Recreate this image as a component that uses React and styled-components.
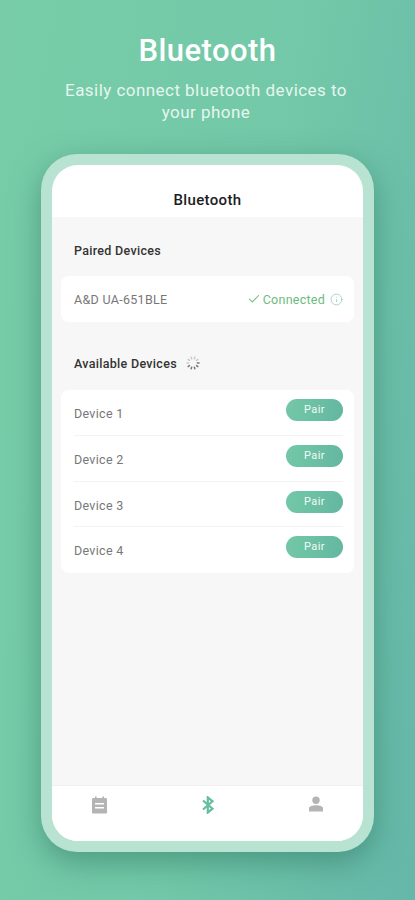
import React from "react";
import styled, { createGlobalStyle } from "styled-components";
import { Check, Info } from "lucide-react";

const Global = createGlobalStyle`
  html, body { margin: 0; padding: 0; }
  body { font-family: Roboto, "Liberation Sans", sans-serif; }
`;

const Page = styled.div`
  width: 415px;
  height: 900px;
  overflow: hidden;
  box-sizing: border-box;
  padding-top: 32px;
  display: flex;
  flex-direction: column;
  align-items: center;
  background: linear-gradient(100deg, #78cda8 0%, #72c8a8 55%, #65b7a9 100%);
`;
const Title = styled.h1`
  margin: 0;
  font-size: 31px;
  line-height: 37px;
  font-weight: 500;
  letter-spacing: 0.45px;
  color: #fff;
`;
const Subtitle = styled.p`
  margin: 11px 3px 0 0;
  width: 300px;
  font-size: 17px;
  line-height: 21.5px;
  letter-spacing: 0.45px;
  text-align: center;
  color: #e6f6ee;
`;
const Frame = styled.div`
  margin-top: 31px;
  width: 333px;
  height: 698px;
  box-sizing: border-box;
  padding: 11px;
  border-radius: 36px;
  background: #b8e3d3;
  box-shadow: 0 10px 30px rgba(40, 110, 90, 0.5);
`;
const Screen = styled.div`
  height: 100%;
  border-radius: 26px;
  overflow: hidden;
  display: flex;
  flex-direction: column;
  background: #fff;
`;
const Header = styled.div`
  height: 52px;
  flex: none;
  display: flex;
  align-items: center;
  justify-content: center;
  padding-top: 17px;
  box-sizing: border-box;
  font-size: 15px;
  font-weight: 500;
  letter-spacing: 0.35px;
  color: #1c1c1c;
`;
const Body = styled.div`
  flex: 1;
  background: #f7f7f7;
  padding: 0 9px 0 9px;
  display: flex;
  flex-direction: column;
`;
const SectionTitle = styled.div`
  display: flex;
  align-items: center;
  gap: 9px;
  padding-left: 13px;
  height: 16px;
  margin-top: ${(p) => p.$top}px;
  font-size: 12.5px;
  font-weight: 500;
  letter-spacing: 0.3px;
  color: #333;
`;
const Card = styled.div`
  margin-top: ${(p) => p.$top}px;
  background: #fff;
  border-radius: 8px;
  padding: 0 11px 0 13px;
`;
const PairedRow = styled.div`
  height: 46px;
  display: flex;
  align-items: center;
  justify-content: space-between;
`;
const DeviceName = styled.span`
  font-size: 12.5px;
  letter-spacing: 0.3px;
  color: #777;
`;
const Status = styled.span`
  display: flex;
  align-items: center;
  gap: 2px;
  font-size: 12.5px;
  letter-spacing: 0.25px;
  color: #6dbb7d;
`;
const InfoWrap = styled.span`
  display: flex;
  margin-left: 3px;
  color: #8dcbb0;
`;
const DeviceRow = styled.div`
  height: 45.8px;
  display: flex;
  justify-content: space-between;
  box-sizing: border-box;
  padding-top: 9px;
  border-bottom: 1px solid ${(p) => (p.$last ? "transparent" : "#f3f3f3")};
`;
const RowName = styled(DeviceName)`
  padding-top: 7px;
`;
const PairButton = styled.button`
  width: 57px;
  height: 22px;
  padding: 0 0 1px;
  border: 0;
  border-radius: 11px;
  background: linear-gradient(100deg, #74c8a8, #63b7a0);
  color: #f2fbf7;
  font-family: inherit;
  font-size: 11px;
  font-weight: 400;
  letter-spacing: 0.4px;
`;
const Nav = styled.nav`
  height: 56px;
  flex: none;
  display: grid;
  grid-template-columns: repeat(3, 108px);
  justify-content: center;
  box-sizing: border-box;
  background: #fff;
  border-top: 1px solid #f0f0f0;
`;
const NavItem = styled.div`
  display: flex;
  justify-content: center;
  padding-top: 10px;
`;

const Spinner = () => (
  <svg width="14" height="14" viewBox="0 0 14 14" fill="none" strokeWidth="1.5" strokeLinecap="round">
    {Array.from({ length: 10 }, (_, i) => {
      const a = (i * Math.PI) / 5;
      const c = Math.cos(a);
      const s = Math.sin(a);
      return (
        <line
          key={i}
          x1={7 + 4.4 * c}
          y1={7 + 4.4 * s}
          x2={7 + 6 * c}
          y2={7 + 6 * s}
          stroke={i < 5 ? "#777" : "#c9c9c9"}
        />
      );
    })}
  </svg>
);

const NotesIcon = () => (
  <svg width="15" height="18" viewBox="0 0 15 18">
    <rect x="0" y="2" width="15" height="15.5" rx="1.2" fill="#b4b4b4" />
    <rect x="3" y="0.5" width="1.6" height="3" fill="#b4b4b4" />
    <rect x="10.4" y="0.5" width="1.6" height="3" fill="#b4b4b4" />
    <rect x="3" y="7" width="9" height="1.5" fill="#fff" />
    <rect x="3" y="11" width="9" height="1.5" fill="#fff" />
  </svg>
);

const BluetoothIcon = () => (
  <svg width="14" height="18" viewBox="0 0 14 18" fill="none" stroke="#66bda2" strokeWidth="2.2">
    <path d="M2 4.5 L11.5 12.7 L6.8 16.6 V1.4 L11.5 5.3 L2 13.5" />
  </svg>
);

const PersonIcon = () => (
  <svg width="14" height="16" viewBox="0 0 14 16" fill="#b4b4b4">
    <circle cx="7" cy="4.2" r="3.7" />
    <path d="M0 15.5 V12.5 C0 10.2 3.4 9.2 7 9.2 C10.6 9.2 14 10.2 14 12.5 V15.5 Z" />
  </svg>
);

const devices = ["Device 1", "Device 2", "Device 3", "Device 4"];

export default function App() {
  return (
    <Page>
      <Global />
      <Title>Bluetooth</Title>
      <Subtitle>Easily connect bluetooth devices to your phone</Subtitle>
      <Frame>
        <Screen>
          <Header>Bluetooth</Header>
          <Body>
            <SectionTitle $top={25}>Paired Devices</SectionTitle>
            <Card $top={18}>
              <PairedRow>
                <DeviceName>A&amp;D UA-651BLE</DeviceName>
                <Status>
                  <Check size={14} strokeWidth={1.8} />
                  Connected
                  <InfoWrap>
                    <Info size={13} strokeWidth={1.4} />
                  </InfoWrap>
                </Status>
              </PairedRow>
            </Card>
            <SectionTitle $top={33}>
              Available Devices
              <Spinner />
            </SectionTitle>
            <Card $top={19}>
              {devices.map((d, i) => (
                <DeviceRow key={d} $last={i === devices.length - 1}>
                  <RowName>{d}</RowName>
                  <PairButton>Pair</PairButton>
                </DeviceRow>
              ))}
            </Card>
          </Body>
          <Nav>
            <NavItem>
              <NotesIcon />
            </NavItem>
            <NavItem>
              <BluetoothIcon />
            </NavItem>
            <NavItem>
              <PersonIcon />
            </NavItem>
          </Nav>
        </Screen>
      </Frame>
    </Page>
  );
}
